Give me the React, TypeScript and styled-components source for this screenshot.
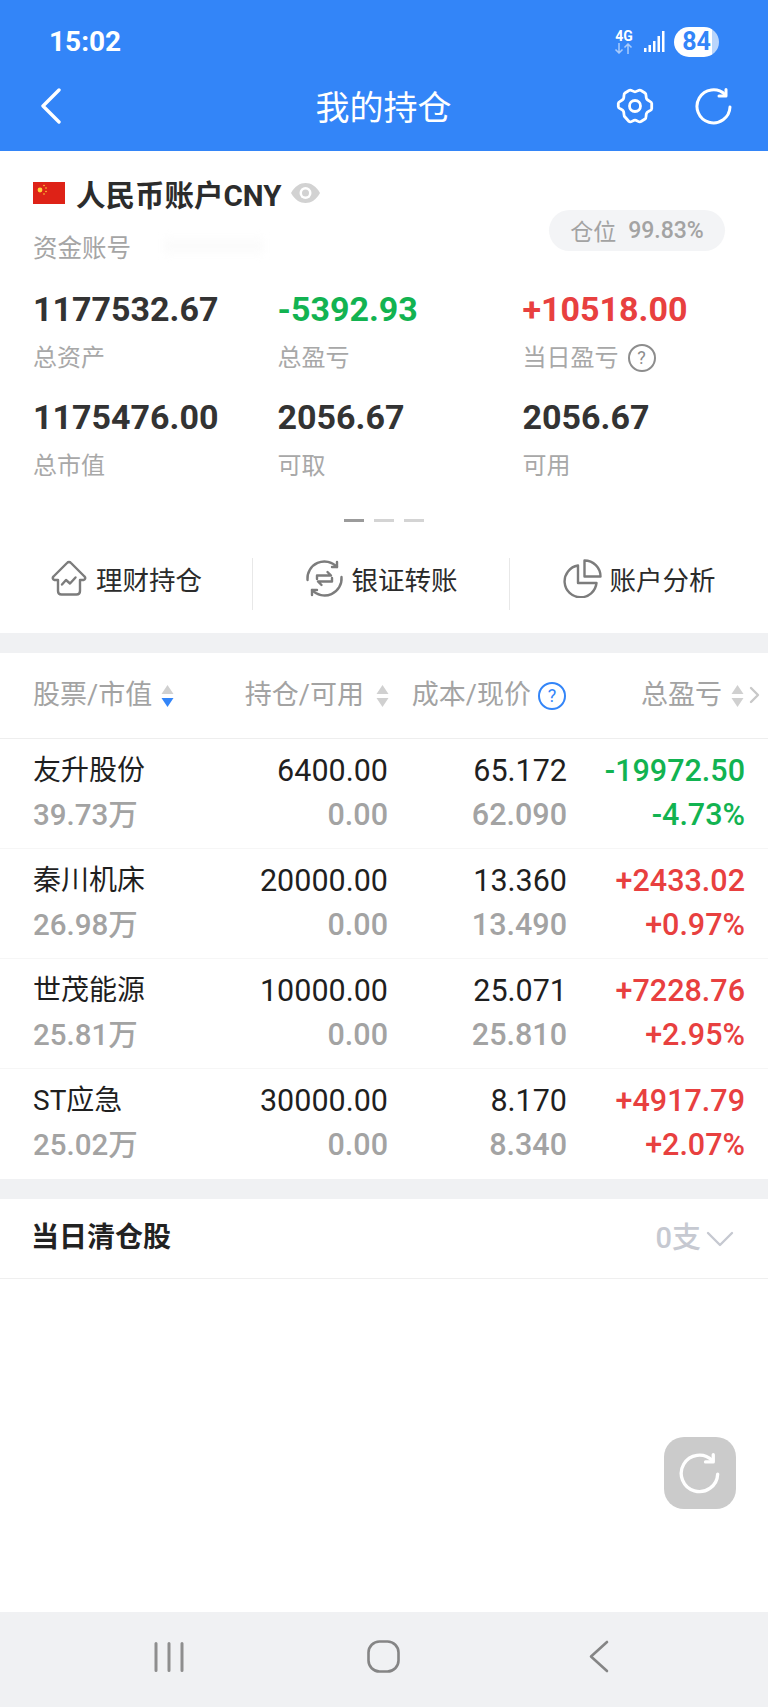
import React, { FC } from "react";
import styled, { createGlobalStyle } from "styled-components";

const GlobalStyle = createGlobalStyle`
  html, body {
    margin: 0;
    padding: 0;
    background: #ffffff;
  }
  * {
    box-sizing: border-box;
  }
`;

const green = "#12b351";
const red = "#e8403f";

const Page = styled("div")`
  position: relative;
  width: 768px;
  height: 1707px;
  display: flex;
  flex-direction: column;
  background: #ffffff;
  font-family: Roboto, "Noto Sans CJK SC", sans-serif;
  overflow: hidden;
`;

const Header = styled("header")`
  height: 151px;
  flex-shrink: 0;
  background: #3385f8;
  color: #ffffff;
  display: flex;
  flex-direction: column;
`;

const StatusBar = styled("div")`
  height: 75px;
  padding: 8px 49px 0 49px;
  display: flex;
  align-items: center;
  justify-content: space-between;
`;

const Time = styled("span")`
  font-size: 28px;
  font-weight: 700;
`;

const StatusIcons = styled("div")`
  display: flex;
  align-items: center;
`;

const Network = styled("div")`
  display: flex;
  flex-direction: column;
  align-items: center;
  width: 20px;
  margin-right: 10px;
`;

const NetworkLabel = styled("span")`
  font-size: 14px;
  font-weight: 700;
  line-height: 14px;
`;

const Battery = styled("div")`
  width: 45px;
  height: 30px;
  margin-left: 8px;
  border-radius: 15px;
  background: linear-gradient(90deg, #ffffff 84%, #b9d5fb 84%);
  color: #3385f8;
  font-size: 25px;
  font-weight: 700;
  line-height: 30px;
  text-align: center;
`;

const NavBar = styled("div")`
  flex: 1;
  padding: 0 35px 15px 40px;
  display: grid;
  grid-template-columns: 1fr 136px 1fr;
  align-items: center;
`;

const NavTitle = styled("h1")`
  margin: 0 0 0 -3px;
  font-size: 34px;
  font-weight: 400;
  white-space: nowrap;
`;

const NavActions = styled("div")`
  display: flex;
  align-items: center;
  justify-content: flex-end;
  gap: 40px;
`;

const Account = styled("section")`
  padding: 25px 43px 0 33px;
  position: relative;
`;

const AccountTitle = styled("div")`
  display: flex;
  align-items: center;
  height: 34px;
`;

const AccountName = styled("span")`
  margin-left: 11px;
  font-size: 29.5px;
  font-weight: 700;
  color: #2c2c2c;
`;

const AccountMeta = styled("div")`
  display: flex;
  align-items: center;
  justify-content: space-between;
  height: 65px;
`;

const AccountNo = styled("span")`
  display: flex;
  align-items: center;
  font-size: 24.5px;
  color: #a5a5a5;
  margin-top: 7px;
`;

const MaskedNumber = styled("span")`
  width: 100px;
  height: 14px;
  margin-left: 33px;
  background: #fbfbfb;
  filter: blur(4px);
`;

const PositionPill = styled("div")`
  height: 41px;
  width: 176px;
  margin-top: -25px;
  border-radius: 21px;
  background: #f3f4f6;
  color: #a3a3a3;
  font-size: 23px;
  display: flex;
  align-items: center;
  justify-content: center;
  gap: 12px;
`;

const PillValue = styled("span")`
  font-weight: 500;
  font-size: 23px;
`;

const SummaryGrid = styled("div")`
  display: grid;
  grid-template-columns: 244.5px 245px 1fr;
  grid-row-gap: 21px;
  margin-top: 14px;
`;

const SummaryCell = styled("div")`
  display: flex;
  flex-direction: column;
`;

const SummaryValue = styled("span")<{ $color?: string }>`
  font-size: 34px;
  font-weight: 700;
  line-height: 40px;
  color: ${({ $color }) => $color || "#333333"};
`;

const SummaryLabel = styled("span")`
  margin-top: 11px;
  height: 36px;
  font-size: 24px;
  line-height: 36px;
  color: #a8a8a8;
  display: flex;
  align-items: center;
  gap: 9px;
`;

const HelpMark = styled("span")<{ $color: string; $size: number }>`
  width: ${({ $size }) => $size}px;
  height: ${({ $size }) => $size}px;
  border: 2px solid ${({ $color }) => $color};
  border-radius: 50%;
  color: ${({ $color }) => $color};
  font-size: ${({ $size }) => $size - 10}px;
  font-weight: 400;
  line-height: ${({ $size }) => $size - 4}px;
  text-align: center;
  flex-shrink: 0;
`;

const Dots = styled("div")`
  display: flex;
  justify-content: center;
  gap: 10px;
  margin-top: 35px;
`;

const Dot = styled("span")<{ $active?: boolean }>`
  width: 20px;
  height: 3px;
  background: ${({ $active }) => ($active ? "#9b9b9b" : "#d4d4d4")};
`;

const Actions = styled("div")`
  display: grid;
  grid-template-columns: 253px 257px 1fr;
  height: 52px;
  margin-top: 36px;
`;

const ActionItem = styled("div")<{ $divider?: boolean }>`
  display: flex;
  align-items: center;
  justify-content: center;
  gap: 8px;
  padding-bottom: 12px;
  font-size: 26.5px;
  color: #2b2b2b;
  border-right: ${({ $divider }) => ($divider ? "1px solid #e8e8e8" : "none")};
`;

const Band = styled("div")<{ $height: number; $top?: number }>`
  height: ${({ $height }) => $height}px;
  margin-top: ${({ $top }) => $top || 0}px;
  flex-shrink: 0;
  background: #f0f1f3;
`;

const HoldingsHead = styled("div")`
  height: 86px;
  flex-shrink: 0;
  border-bottom: 1px solid #eeeeee;
  position: relative;
  display: grid;
  grid-template-columns: 33px 155px 201px 177px 178px;
  align-items: center;
  font-size: 27px;
  color: #a3a3a3;
`;

const HeadCell = styled("div")<{ $end?: boolean; $col: number; $gap: number }>`
  grid-column: ${({ $col }) => $col};
  display: flex;
  align-items: center;
  justify-content: ${({ $end }) => ($end ? "flex-end" : "flex-start")};
  gap: ${({ $gap }) => $gap}px;
  white-space: nowrap;
`;

const HeadLabel = styled("span")`
  margin-top: -6px;
`;

const ChevronSlot = styled("span")`
  position: absolute;
  right: 8px;
  top: 33px;
  display: flex;
`;

const Row = styled("div")<{ $last?: boolean }>`
  height: 110px;
  flex-shrink: 0;
  padding: 10px 23px 0 33px;
  border-bottom: ${({ $last }) => ($last ? "none" : "1px solid #f6f6f6")};
  display: grid;
  grid-template-columns: 171px 184px 179px 178px;
  grid-template-rows: 44px 44px;
`;

const Name = styled("span")`
  font-size: 28px;
  line-height: 44px;
  color: #1f1f1f;
`;

const SubName = styled("span")`
  font-size: 29.5px;
  font-weight: 500;
  line-height: 44px;
  color: #a3a3a3;
`;

const Figure = styled("span")<{ $color?: string; $weight?: number }>`
  font-size: 30.5px;
  font-weight: ${({ $weight }) => $weight || 400};
  line-height: 44px;
  text-align: right;
  color: ${({ $color }) => $color || "#1f1f1f"};
`;

const ClearedRow = styled("div")`
  height: 80px;
  flex-shrink: 0;
  padding: 0 34px 8px 31px;
  border-bottom: 1px solid #efefef;
  display: flex;
  align-items: center;
  justify-content: space-between;
`;

const ClearedTitle = styled("span")`
  font-size: 28px;
  font-weight: 700;
  color: #222222;
`;

const ClearedCount = styled("span")`
  display: flex;
  align-items: center;
  gap: 5px;
  font-size: 29px;
  font-weight: 500;
  color: #c6c9d1;
`;

const ClearedArrow = styled("span")`
  display: flex;
  margin-top: 8px;
`;

const Spacer = styled("div")`
  flex: 1;
`;

const FloatButton = styled("div")`
  position: absolute;
  left: 664px;
  top: 1437px;
  width: 72px;
  height: 72px;
  border-radius: 20px;
  background: #cbcbcb;
  display: flex;
  align-items: center;
  justify-content: center;
`;

const SystemBar = styled("div")`
  height: 95px;
  flex-shrink: 0;
  background: #f0f1f3;
  display: grid;
  grid-template-columns: repeat(3, 1fr);
  padding: 0 62px 6px 62px;
  align-items: center;
  justify-items: center;
`;

const Back: FC = () => (
  <svg width="22" height="36" viewBox="0 0 22 36" fill="none" stroke="#fff" strokeWidth="3.4" strokeLinecap="round" strokeLinejoin="round">
    <path d="M19 2 3 18l16 16" />
  </svg>
);

const Gear: FC = () => (
  <svg width="40" height="38" viewBox="0 0 40 38" fill="none" stroke="#fff" strokeWidth="2.8" strokeLinejoin="round">
    <path d="M14 3.5c1.8-1.6 3.8 1.3 6 1.3s4.200-2.900 6-1.300l4 2.500c1.900 1.300.4 3.900 1.700 6 1.100 2 5 2.100 5 4.300v5.400c0 2.200-3.900 2.300-5 4.300-1.300 2.100.2 4.700-1.700 6l-4 2.500c-1.800 1.600-3.800-1.300-6-1.300s-4.200 2.900-6 1.300L10 30c-1.900-1.300-.4-3.900-1.700-6-1.100-2-5-2.100-5-4.300v-3.400c0-2.200 3.900-2.300 5-4.300 1.300-2.100-.2-4.700 1.700-6z" />
    <circle cx="20" cy="19" r="5.500" />
  </svg>
);

const Refresh: FC<{ size: number; color: string; weight: number }> = ({ size, color, weight }) => (
  <svg width={size} height={size} viewBox="0 0 38 38" fill="none" stroke={color} strokeWidth={weight} strokeLinecap="round" strokeLinejoin="round">
    <path d="M35 20a16.500 16.500 0 1 1-5-12.500" />
    <path d="M31 2.500v6.500h-7" />
  </svg>
);

const Flag: FC = () => (
  <svg width="32" height="22" viewBox="0 0 32 22">
    <rect width="32" height="22" fill="#de2217" />
    <circle cx="7" cy="8" r="2.400" fill="#ffd23a" />
    <circle cx="11" cy="3.500" r="0.800" fill="#ffd23a" />
    <circle cx="13" cy="6" r="0.800" fill="#ffd23a" />
    <circle cx="13" cy="9.500" r="0.800" fill="#ffd23a" />
    <circle cx="11" cy="12" r="0.800" fill="#ffd23a" />
  </svg>
);

const Eye: FC = () => (
  <svg width="31" height="24" viewBox="0 0 31 24" style={{ marginLeft: 9 }}>
    <path d="M1 12C5 5 10 2 15.500 2S26 5 30 12c-4 7-9 10-14.500 10S5 19 1 12z" fill="#d2d2d2" />
    <circle cx="15.500" cy="12" r="6" fill="#ffffff" />
    <circle cx="15.500" cy="12" r="3.500" fill="#d2d2d2" />
  </svg>
);

const HouseIcon: FC = () => (
  <svg width="38" height="36" viewBox="0 0 38 36" fill="none" stroke="#7c7c7c" strokeWidth="2.400" strokeLinecap="round" strokeLinejoin="round">
    <path d="M8 20H4.500c-2-.5-2.300-2.300-1-3.500L17 3c1.200-1.300 2.800-1.300 4 0l13.500 13.500c1.300 1.200 1 3-1 3.500H30v11c0 2-1 3.500-3.500 3.500h-15C9 34.500 8 33 8 31z" />
    <path d="M12 24.500l4-4.500 4 3.500 5.500-6" />
  </svg>
);

const TransferIcon: FC = () => (
  <svg width="39" height="39" viewBox="0 0 39 39" fill="none" stroke="#7c7c7c" strokeWidth="2.400" strokeLinecap="round" strokeLinejoin="round">
    <path d="M2.500 21A17 17 0 0 1 32 8" />
    <path d="M36.500 18A17 17 0 0 1 7 31" />
    <path d="M32 3v5h-5" />
    <path d="M7 36v-5h5" />
    <path d="M12 20v-3.500h14l-3.500-3.500" />
    <path d="M27 19v3.500H13l3.500 3.500" />
  </svg>
);

const PieIcon: FC = () => (
  <svg width="39" height="39" viewBox="0 0 39 39" fill="none" stroke="#7c7c7c" strokeWidth="2.400" strokeLinejoin="round">
    <path d="M15 6.500A16 16 0 1 0 33.500 24H15z" />
    <path d="M21.500 1.500V17.500H37.500A16 16 0 0 0 21.500 1.500z" />
  </svg>
);

const SortArrows: FC<{ active?: boolean }> = ({ active }) => (
  <svg width="13" height="24" viewBox="0 0 13 24">
    <path d="M6.500 1 12.500 10H.5z" fill="#d0d0d0" />
    <path d="M6.500 23 12.500 14H.5z" fill={active ? "#3385f8" : "#d0d0d0"} />
  </svg>
);

const SmallChevron: FC<{ dir: "right" | "down" }> = ({ dir }) =>
  dir === "right" ? (
    <svg width="11" height="18" viewBox="0 0 11 18" fill="none" stroke="#c8c8c8" strokeWidth="2.400" strokeLinecap="round" strokeLinejoin="round">
      <path d="M2 2l7 7-7 7" />
    </svg>
  ) : (
    <svg width="28" height="16" viewBox="0 0 28 16" fill="none" stroke="#c6c9d1" strokeWidth="2.400" strokeLinecap="round" strokeLinejoin="round">
      <path d="M2 2l12 12L26 2" />
    </svg>
  );

const summary = [
  { value: "1177532.67", label: "总资产" },
  { value: "-5392.93", label: "总盈亏", color: green },
  { value: "+10518.00", label: "当日盈亏", color: red, help: true },
  { value: "1175476.00", label: "总市值" },
  { value: "2056.67", label: "可取" },
  { value: "2056.67", label: "可用" },
];

const holdings = [
  { name: "友升股份", cap: "39.73万", qty: "6400.00", free: "0.00", cost: "65.172", price: "62.090", pnl: "-19972.50", pct: "-4.73%", color: green },
  { name: "秦川机床", cap: "26.98万", qty: "20000.00", free: "0.00", cost: "13.360", price: "13.490", pnl: "+2433.02", pct: "+0.97%", color: red },
  { name: "世茂能源", cap: "25.81万", qty: "10000.00", free: "0.00", cost: "25.071", price: "25.810", pnl: "+7228.76", pct: "+2.95%", color: red },
  { name: "ST应急", cap: "25.02万", qty: "30000.00", free: "0.00", cost: "8.170", price: "8.340", pnl: "+4917.79", pct: "+2.07%", color: red },
];

const App: FC = () => {
  return (
    <Page>
      <GlobalStyle />
      <Header>
        <StatusBar>
          <Time>15:02</Time>
          <StatusIcons>
            <Network>
              <NetworkLabel>4G</NetworkLabel>
              <svg width="20" height="11" viewBox="0 0 20 11" fill="none" stroke="#a9cbfb" strokeWidth="1.500">
                <path d="M5 0v10M1.500 6.500 5 10l3.500-3.500M14 11V1M10.500 4.500 14 1l3.500 3.500" />
              </svg>
            </Network>
            <svg width="22" height="21" viewBox="0 0 22 21" fill="#fff">
              <rect x="0" y="17" width="2.500" height="4" />
              <rect x="4.500" y="14" width="2.500" height="7" />
              <rect x="9" y="10" width="2.500" height="11" />
              <rect x="13.500" y="5" width="2.500" height="16" />
              <rect x="18" y="0" width="2.500" height="21" />
            </svg>
            <Battery>84</Battery>
          </StatusIcons>
        </StatusBar>
        <NavBar>
          <Back />
          <NavTitle>我的持仓</NavTitle>
          <NavActions>
            <Gear />
            <Refresh size={38} color="#ffffff" weight={3} />
          </NavActions>
        </NavBar>
      </Header>

      <Account>
        <AccountTitle>
          <Flag />
          <AccountName>人民币账户CNY</AccountName>
          <Eye />
        </AccountTitle>
        <AccountMeta>
          <AccountNo>
            资金账号
            <MaskedNumber />
          </AccountNo>
          <PositionPill>
            仓位<PillValue>99.83%</PillValue>
          </PositionPill>
        </AccountMeta>
        <SummaryGrid>
          {summary.map((item) => (
            <SummaryCell key={item.label}>
              <SummaryValue $color={item.color}>{item.value}</SummaryValue>
              <SummaryLabel>
                {item.label}
                {item.help && <HelpMark $color="#8d8d8d" $size={28}>?</HelpMark>}
              </SummaryLabel>
            </SummaryCell>
          ))}
        </SummaryGrid>
      </Account>
      <Dots>
        <Dot $active />
        <Dot />
        <Dot />
      </Dots>
      <Actions>
        <ActionItem $divider>
          <HouseIcon />
          理财持仓
        </ActionItem>
        <ActionItem $divider>
          <TransferIcon />
          银证转账
        </ActionItem>
        <ActionItem>
          <PieIcon />
          账户分析
        </ActionItem>
      </Actions>
      <Band $height={20} $top={23} />

      <HoldingsHead>
        <HeadCell $col={2} $gap={9}>
          <HeadLabel>股票/市值</HeadLabel>
          <SortArrows active />
        </HeadCell>
        <HeadCell $col={3} $end $gap={12}>
          <HeadLabel>持仓/可用</HeadLabel>
          <SortArrows />
        </HeadCell>
        <HeadCell $col={4} $end $gap={7}>
          <HeadLabel>成本/现价</HeadLabel>
          <HelpMark $color="#3385f8" $size={28}>?</HelpMark>
        </HeadCell>
        <HeadCell $col={5} $end $gap={9}>
          <HeadLabel>总盈亏</HeadLabel>
          <SortArrows />
        </HeadCell>
        <ChevronSlot>
          <SmallChevron dir="right" />
        </ChevronSlot>
      </HoldingsHead>

      {holdings.map((row, i) => (
        <Row key={row.name} $last={i === holdings.length - 1}>
          <Name>{row.name}</Name>
          <Figure>{row.qty}</Figure>
          <Figure>{row.cost}</Figure>
          <Figure $color={row.color} $weight={500}>{row.pnl}</Figure>
          <SubName>{row.cap}</SubName>
          <Figure $color="#a3a3a3" $weight={500}>{row.free}</Figure>
          <Figure $color="#a3a3a3" $weight={500}>{row.price}</Figure>
          <Figure $color={row.color} $weight={500}>{row.pct}</Figure>
        </Row>
      ))}

      <Band $height={20} />
      <ClearedRow>
        <ClearedTitle>当日清仓股</ClearedTitle>
        <ClearedCount>
          0支
          <ClearedArrow>
            <SmallChevron dir="down" />
          </ClearedArrow>
        </ClearedCount>
      </ClearedRow>
      <Spacer />
      <FloatButton>
        <Refresh size={42} color="#ffffff" weight={3} />
      </FloatButton>
      <SystemBar>
        <svg width="30" height="30" viewBox="0 0 30 30" fill="none" stroke="#8e8e8e" strokeWidth="3" strokeLinecap="round">
          <path d="M2 1.500v27M15 1.500v27M28 1.500v27" />
        </svg>
        <svg width="33" height="33" viewBox="0 0 33 33" fill="none" stroke="#858585" strokeWidth="2.600">
          <rect x="1.500" y="1.500" width="30" height="30" rx="11" />
        </svg>
        <svg width="21" height="33" viewBox="0 0 21 33" fill="none" stroke="#858585" strokeWidth="2.600" strokeLinecap="round" strokeLinejoin="round">
          <path d="M19 2 3 16.500 19 31" />
        </svg>
      </SystemBar>
    </Page>
  );
};

export default App;
